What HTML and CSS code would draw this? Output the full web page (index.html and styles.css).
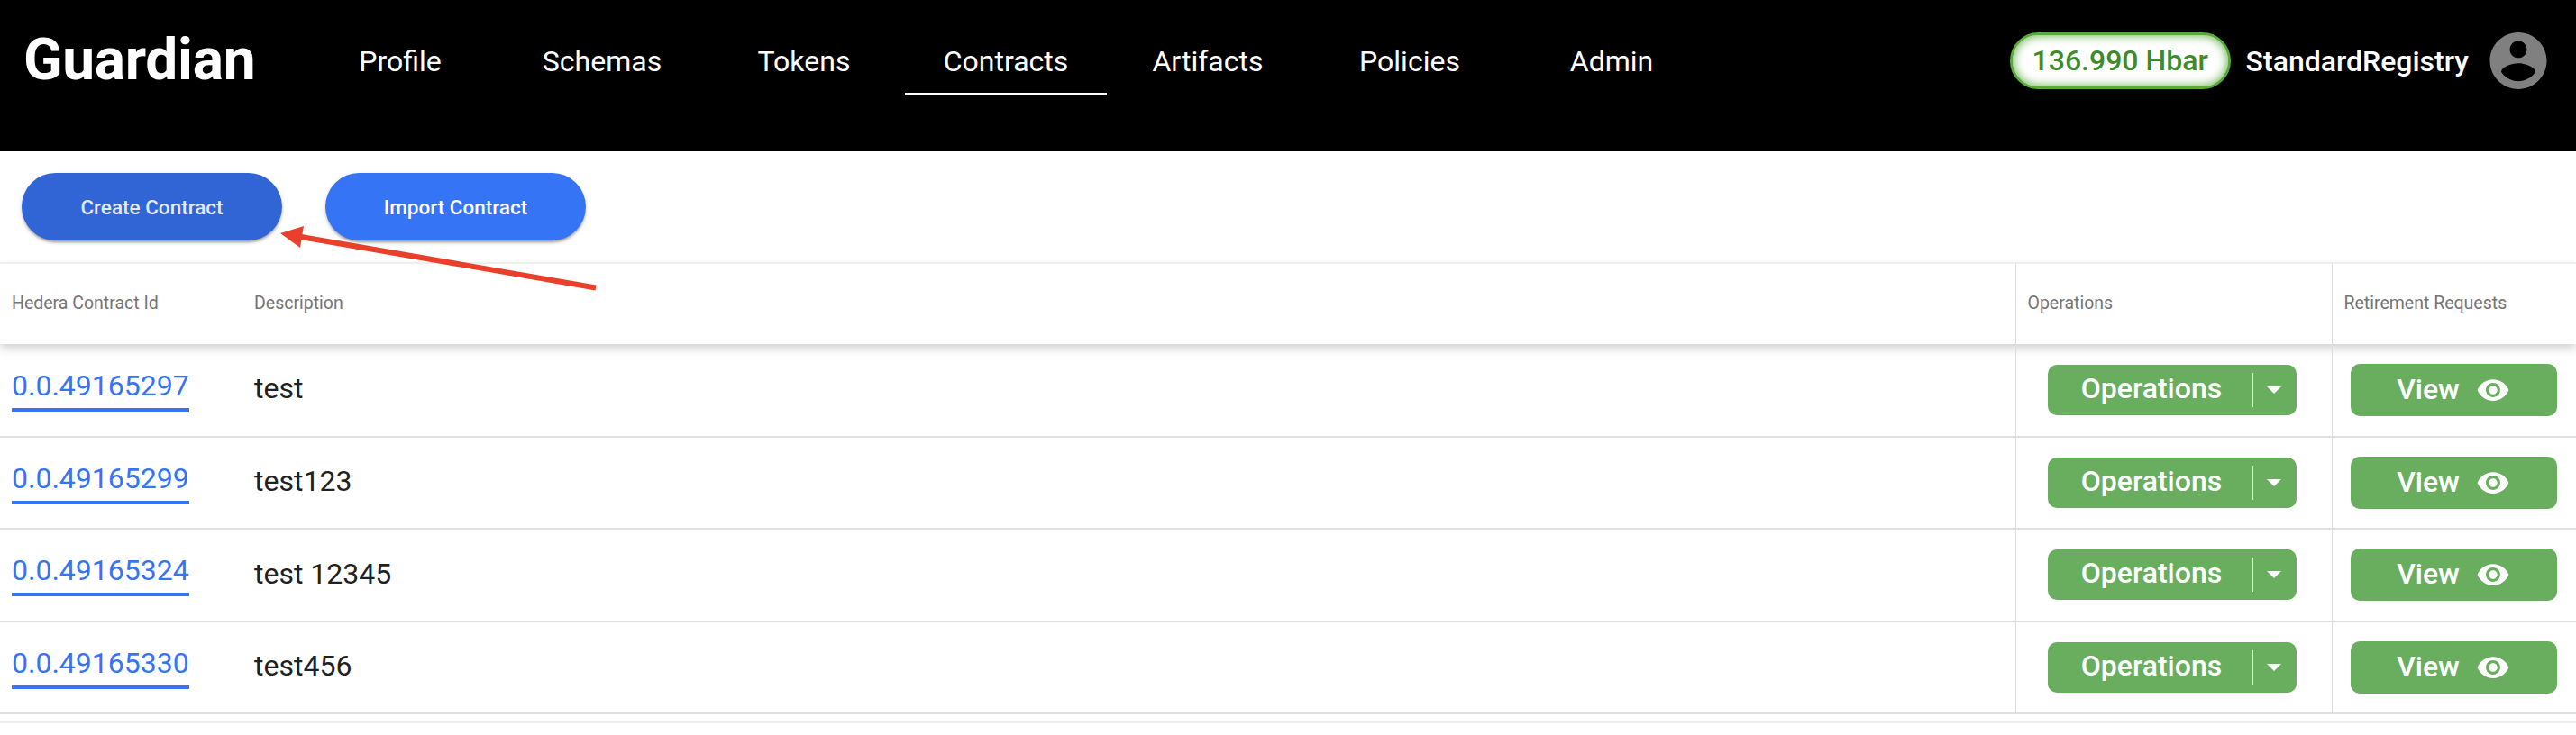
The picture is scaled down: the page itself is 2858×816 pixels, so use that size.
FILE: index.html
```html
<!DOCTYPE html>
<html lang="en">
<head>
    <meta charset="UTF-8">
    <meta name="viewport" content="width=device-width, initial-scale=1.0">
    <title>Guardian</title>
    <link rel="stylesheet" href="styles.css">
</head>
<body>
    <header class="topbar">
        <div class="logo">Guardian</div>
        <nav class="tabs">
            <a class="tab">Profile</a>
            <a class="tab">Schemas</a>
            <a class="tab">Tokens</a>
            <a class="tab active">Contracts</a>
            <a class="tab">Artifacts</a>
            <a class="tab">Policies</a>
            <a class="tab">Admin</a>
        </nav>
        <div class="user">
            <div class="balance">136.990 Hbar</div>
            <div class="username">StandardRegistry</div>
            <svg class="avatar" viewBox="2 2 20 20"><path d="M12 2C6.48 2 2 6.48 2 12s4.48 10 10 10 10-4.48 10-10S17.52 2 12 2zm0 3c1.66 0 3 1.34 3 3s-1.34 3-3 3-3-1.34-3-3 1.34-3 3-3zm0 14.2c-2.5 0-4.71-1.28-6-3.22.03-1.99 4-3.08 6-3.08 1.99 0 5.97 1.09 6 3.08-1.29 1.94-3.5 3.22-6 3.22z"/></svg>
        </div>
    </header>

    <div class="actions">
        <button class="pill pill-focused">Create Contract</button>
        <button class="pill">Import Contract</button>
    </div>

    <!-- red annotation arrow from the screenshot -->
    <svg class="arrow" width="360" height="90" viewBox="0 0 360 90">
        <path d="M355 71.5 L28 15" stroke="#e8402a" stroke-width="6" fill="none"/>
        <path d="M5 11 L31 3 L27 27 Z" fill="#e8402a"/>
    </svg>

    <table class="contracts">
        <thead>
            <tr>
                <th class="col-id">Hedera Contract Id</th>
                <th class="col-desc">Description</th>
                <th class="col-ops">Operations</th>
                <th class="col-ret">Retirement Requests</th>
            </tr>
        </thead>
        <tbody>
            <tr>
                <td><a class="contract-id">0.0.49165297</a></td>
                <td class="desc">test</td>
                <td class="cell-btn"><div class="ops"><span class="ops-label">Operations</span><span class="ops-caret"></span></div></td>
                <td class="cell-btn"><div class="view"><span class="view-label">View</span><svg class="eye" viewBox="0 0 24 24"><path d="M12 4.5C7 4.5 2.73 7.61 1 12c1.73 4.39 6 7.5 11 7.5s9.27-3.11 11-7.5c-1.73-4.39-6-7.5-11-7.5zM12 17c-2.76 0-5-2.24-5-5s2.24-5 5-5 5 2.24 5 5-2.24 5-5 5zm0-8c-1.66 0-3 1.34-3 3s1.34 3 3 3 3-1.34 3-3-1.34-3-3-3z"/></svg></div></td>
            </tr>
            <tr>
                <td><a class="contract-id">0.0.49165299</a></td>
                <td class="desc">test123</td>
                <td class="cell-btn"><div class="ops"><span class="ops-label">Operations</span><span class="ops-caret"></span></div></td>
                <td class="cell-btn"><div class="view"><span class="view-label">View</span><svg class="eye" viewBox="0 0 24 24"><path d="M12 4.5C7 4.5 2.73 7.61 1 12c1.73 4.39 6 7.5 11 7.5s9.27-3.11 11-7.5c-1.73-4.39-6-7.5-11-7.5zM12 17c-2.76 0-5-2.24-5-5s2.24-5 5-5 5 2.24 5 5-2.24 5-5 5zm0-8c-1.66 0-3 1.34-3 3s1.34 3 3 3 3-1.34 3-3-1.34-3-3-3z"/></svg></div></td>
            </tr>
            <tr>
                <td><a class="contract-id">0.0.49165324</a></td>
                <td class="desc">test 12345</td>
                <td class="cell-btn"><div class="ops"><span class="ops-label">Operations</span><span class="ops-caret"></span></div></td>
                <td class="cell-btn"><div class="view"><span class="view-label">View</span><svg class="eye" viewBox="0 0 24 24"><path d="M12 4.5C7 4.5 2.73 7.61 1 12c1.73 4.39 6 7.5 11 7.5s9.27-3.11 11-7.5c-1.73-4.39-6-7.5-11-7.5zM12 17c-2.76 0-5-2.24-5-5s2.24-5 5-5 5 2.24 5 5-2.24 5-5 5zm0-8c-1.66 0-3 1.34-3 3s1.34 3 3 3 3-1.34 3-3-1.34-3-3-3z"/></svg></div></td>
            </tr>
            <tr>
                <td><a class="contract-id">0.0.49165330</a></td>
                <td class="desc">test456</td>
                <td class="cell-btn"><div class="ops"><span class="ops-label">Operations</span><span class="ops-caret"></span></div></td>
                <td class="cell-btn"><div class="view"><span class="view-label">View</span><svg class="eye" viewBox="0 0 24 24"><path d="M12 4.5C7 4.5 2.73 7.61 1 12c1.73 4.39 6 7.5 11 7.5s9.27-3.11 11-7.5c-1.73-4.39-6-7.5-11-7.5zM12 17c-2.76 0-5-2.24-5-5s2.24-5 5-5 5 2.24 5 5-2.24 5-5 5zm0-8c-1.66 0-3 1.34-3 3s1.34 3 3 3 3-1.34 3-3-1.34-3-3-3z"/></svg></div></td>
            </tr>
        </tbody>
    </table>
    <div class="table-end"></div>
</body>
</html>
```

FILE: styles.css
```css
* {
    box-sizing: border-box;
}
html, body {
    margin: 0;
    height: 100%;
    overflow: hidden;
}
body {
    position: relative;
    font-family: Roboto, "Liberation Sans", sans-serif;
    background-color: #fff;
    color: #212121;
}

/* top bar */
.topbar {
    display: flex;
    align-items: flex-start;
    height: 168px;
    background-color: #000;
    color: #fff;
}
.logo {
    width: 332px;
    height: 134px;
    padding-left: 26px;
    font-size: 64px;
    font-weight: 700;
    letter-spacing: -0.3px;
    line-height: 134px;
}
.tabs {
    display: flex;
    padding-top: 28px;
}
.tab {
    width: 224px;
    height: 78px;
    font-size: 32px;
    font-weight: 400;
    line-height: 80px;
    text-align: center;
}
.tab.active {
    border-bottom: 3px solid #fff;
}
.user {
    display: flex;
    align-items: center;
    margin-left: auto;
    margin-top: 36px;
    padding-right: 32px;
}
.balance {
    width: 245px;
    height: 63px;
    border: 3px solid #5aaa3c;
    border-radius: 32px;
    background-color: #fff;
    box-shadow: inset 0 0 12px #5aaa3c;
    color: #3d8b2c;
    font-size: 32px;
    font-weight: 500;
    line-height: 57px;
    text-align: center;
}
.username {
    margin-left: 17px;
    font-size: 32px;
    font-weight: 500;
}
.avatar {
    width: 64px;
    height: 63px;
    margin-left: 23px;
    fill: #808080;
}

/* buttons above the table */
.actions {
    display: flex;
    gap: 48px;
    height: 123px;
    padding: 24px 0 0 24px;
}
.pill {
    width: 289px;
    height: 75px;
    border: none;
    border-radius: 38px;
    background-color: #3674f6;
    box-shadow: 0 3px 3px -1px rgba(0, 0, 0, 0.3), 0 2px 5px rgba(0, 0, 0, 0.15);
    color: #fff;
    font-family: inherit;
    font-size: 22.5px;
    font-weight: 500;
}
.pill-focused {
    background-color: #3165d6;
    color: #e4e9f6;
}
.arrow {
    position: absolute;
    left: 306px;
    top: 248px;
    z-index: 2;
}

/* table */
.contracts {
    width: 100%;
    border-collapse: collapse;
    table-layout: fixed;
}
.contracts th {
    height: 90px;
    padding: 0 13px 2px;
    border-top: 2px solid #eee;
    font-size: 19.5px;
    font-weight: 400;
    color: #757575;
    text-align: left;
}
.contracts thead tr {
    box-shadow: 0 5px 10px rgba(0, 0, 0, 0.18);
}
.col-id { width: 269px; }
.col-ops { width: 351px; }
.col-ret { width: 271px; }
.col-ops, .col-ret {
    border-left: 1px solid #ddd;
}
.contracts td {
    height: 102.5px;
    padding: 0 13px;
    border-bottom: 2px solid #e0e0e0;
    font-size: 32px;
}
.contracts td.desc {
    padding-bottom: 3px;
}
.contracts td.cell-btn {
    padding: 0;
    border-left: 1px solid #ddd;
}
.contract-id {
    display: inline-block;
    position: relative;
    top: -1px;
    border-bottom: 4px solid #3674f6;
    color: #3674f6;
    line-height: 42px;
    padding-bottom: 4px;
}
.ops {
    display: flex;
    width: 276px;
    height: 56px;
    margin-left: 35px;
    border-radius: 10px;
    background-color: #69ae5f;
    color: #fff;
    font-weight: 500;
    align-items: center;
}
.ops-label {
    width: 228px;
    height: 38px;
    line-height: 35px;
    border-right: 1px solid #fff;
    text-align: center;
    padding-left: 4px;
}
.ops-caret {
    margin-left: 15px;
    border-left: 8px solid transparent;
    border-right: 8px solid transparent;
    border-top: 8px solid #fff;
}
.view {
    display: flex;
    justify-content: center;
    align-items: center;
    gap: 18px;
    width: 229px;
    height: 58px;
    margin-left: 20px;
    border-radius: 10px;
    background-color: #69ae5f;
    color: #fff;
    font-weight: 500;
}
.view-label {
    position: relative;
    top: -1px;
}
.eye {
    width: 38px;
    height: 38px;
    fill: #fff;
}
.table-end {
    height: 2px;
    margin-top: 8px;
    background-color: #eee;
}
```
